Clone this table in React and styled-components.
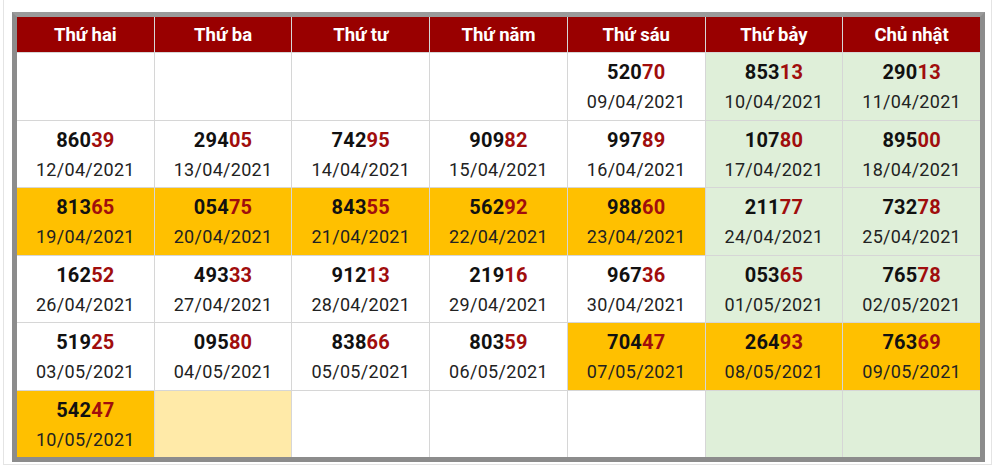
import React from "react";
import styled, { createGlobalStyle } from "styled-components";

const Global = createGlobalStyle`
  html, body { margin: 0; padding: 0; background: #fff; }
  body { font-family: Roboto, "Noto Sans", "Liberation Sans", sans-serif; }
`;

const Frame = styled.div`
  margin-left: 3px;
  width: 989px;
  height: 465px;
  box-sizing: border-box;
  border: 1px solid #e4e4e4;
  border-top: none;
  padding: 12px 5px 2px 8px;
`;

const Table = styled.div`
  width: 973px;
  height: 450px;
  box-sizing: border-box;
  border: 5px solid #8c8c8c;
  border-top-color: #9a9a9a;
  background: #d6d6d6;
  display: grid;
  grid-template-columns: repeat(7, 1fr);
  grid-template-rows: 35px repeat(6, 1fr);
  gap: 1px;
`;

const Head = styled.div`
  background: #990000;
  color: #fff;
  font-weight: 700;
  font-size: 18.5px;
  display: flex;
  align-items: center;
  justify-content: center;
`;

const bgs = {
  white: "#ffffff",
  green: "#dfefd9",
  yellow: "#ffc000",
  pale: "#ffeaa8",
};

const Cell = styled.div`
  background: ${(p) => bgs[p.$tone]};
  display: flex;
  flex-direction: column;
  align-items: center;
  justify-content: center;
  padding-top: 2px;
`;

const Num = styled.div`
  font-weight: 700;
  font-size: 20px;
  line-height: 30px;
  color: #111;
  letter-spacing: 0.2px;
`;

const Tail = styled.span`
  color: #a00d0d;
`;

const DateText = styled.div`
  font-size: 18px;
  line-height: 30px;
  color: #222;
  letter-spacing: 0.3px;
`;

const days = ["Thứ hai", "Thứ ba", "Thứ tư", "Thứ năm", "Thứ sáu", "Thứ bảy", "Chủ nhật"];

const W = "white", G = "green", Y = "yellow", P = "pale";

const rows = [
  [[W], [W], [W], [W], [W, "52070", "09/04/2021"], [G, "85313", "10/04/2021"], [G, "29013", "11/04/2021"]],
  [[W, "86039", "12/04/2021"], [W, "29405", "13/04/2021"], [W, "74295", "14/04/2021"], [W, "90982", "15/04/2021"], [W, "99789", "16/04/2021"], [G, "10780", "17/04/2021"], [G, "89500", "18/04/2021"]],
  [[Y, "81365", "19/04/2021"], [Y, "05475", "20/04/2021"], [Y, "84355", "21/04/2021"], [Y, "56292", "22/04/2021"], [Y, "98860", "23/04/2021"], [G, "21177", "24/04/2021"], [G, "73278", "25/04/2021"]],
  [[W, "16252", "26/04/2021"], [W, "49333", "27/04/2021"], [W, "91213", "28/04/2021"], [W, "21916", "29/04/2021"], [W, "96736", "30/04/2021"], [G, "05365", "01/05/2021"], [G, "76578", "02/05/2021"]],
  [[W, "51925", "03/05/2021"], [W, "09580", "04/05/2021"], [W, "83866", "05/05/2021"], [W, "80359", "06/05/2021"], [Y, "70447", "07/05/2021"], [Y, "26493", "08/05/2021"], [Y, "76369", "09/05/2021"]],
  [[Y, "54247", "10/05/2021"], [P], [W], [W], [W], [G], [G]],
];

export default function App() {
  return (
    <>
      <Global />
      <Frame>
        <Table>
          {days.map((d) => (
            <Head key={d}>{d}</Head>
          ))}
          {rows.map((r, ri) =>
            r.map(([tone, num, date], ci) => (
              <Cell key={`${ri}-${ci}`} $tone={tone}>
                {num && (
                  <>
                    <Num>
                      {num.slice(0, 3)}
                      <Tail>{num.slice(3)}</Tail>
                    </Num>
                    <DateText>{date}</DateText>
                  </>
                )}
              </Cell>
            ))
          )}
        </Table>
      </Frame>
    </>
  );
}
